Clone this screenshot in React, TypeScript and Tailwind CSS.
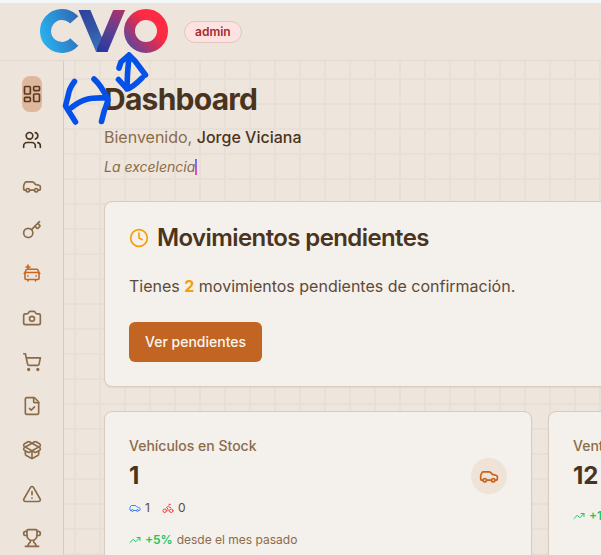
import React from "react";
import {
  Bike, Camera, Car, Clock, FileCheck, Key, LayoutDashboard,
  PackageOpen, ShoppingCart, TrendingUp, TriangleAlert, Trophy, Users,
} from "lucide-react";

function Logo() {
  return (
    <svg className="mb-px ml-10 h-[46px] w-[130px]" viewBox="40 8 130 46" fill="none">
      <defs>
        <linearGradient id="ring-blue" gradientUnits="userSpaceOnUse" x1="50" y1="52" x2="74" y2="10">
          <stop stopColor="#29b5f2" />
          <stop offset="1" stopColor="#3260ae" />
        </linearGradient>
        <linearGradient id="arm-left" gradientUnits="userSpaceOnUse" x1="85" y1="10" x2="102" y2="52">
          <stop stopColor="#2f459d" />
          <stop offset=".45" stopColor="#3454a6" />
          <stop offset="1" stopColor="#377bbf" />
        </linearGradient>
        <linearGradient id="arm-right" gradientUnits="userSpaceOnUse" x1="119" y1="10" x2="102" y2="52">
          <stop stopColor="#a8326f" />
          <stop offset=".5" stopColor="#5e408f" />
          <stop offset="1" stopColor="#2638a0" />
        </linearGradient>
        <linearGradient id="ring-red" gradientUnits="userSpaceOnUse" x1="130" y1="45" x2="157" y2="21">
          <stop stopColor="#66459a" />
          <stop offset=".45" stopColor="#c03262" />
          <stop offset=".8" stopColor="#ff2a43" />
        </linearGradient>
        <clipPath id="arms">
          <rect x="76" y="10" width="52" height="42" />
        </clipPath>
        <clipPath id="foot">
          <rect x="97" y="8" width="32" height="46" />
        </clipPath>
      </defs>
      <circle cx="62" cy="31" r="16.5" stroke="url(#ring-blue)" strokeWidth="11" pathLength="360" strokeDasharray="276 84" transform="rotate(42 62 31)" />
      <g clipPath="url(#arms)" strokeWidth="11">
        <line x1="82.3" y1="5" x2="104.2" y2="57" stroke="url(#arm-left)" />
        <g clipPath="url(#foot)">
          <line x1="121.3" y1="5" x2="99.4" y2="57" stroke="url(#arm-right)" />
        </g>
      </g>
      <circle cx="146" cy="31" r="16.5" stroke="url(#ring-red)" strokeWidth="11" />
    </svg>
  );
}

function CarPlus() {
  return (
    <svg className="size-5" viewBox="0 0 20 20" fill="none" stroke="currentColor" strokeWidth="1.6" strokeLinecap="round" strokeLinejoin="round">
      <path d="M6 1v4M4 3h4M3 8.5l1.2-2.7c.2-.4.6-.6 1-.6h9.6c.4 0 .8.2 1 .6L17 8.5M3 8.5h14v6c0 .7-.4 1-1 1H4c-.6 0-1-.3-1-1v-6ZM3 8.500l-.8 1M17 8.500l.8 1M5.800 12h.3M13.900 12h.3M6 15.500V17M13.500 15.500V17" />
    </svg>
  );
}

const lowerItems = [Camera, ShoppingCart, FileCheck, PackageOpen, TriangleAlert, Trophy];

function Sidebar() {
  return (
    <aside className="flex w-16 shrink-0 flex-col items-center border-r border-[#d8cabd] bg-[#ede5dc] pt-[15px] text-[#8b6b4a]">
      <div className="flex h-9 w-5 shrink-0 items-center justify-center rounded-lg bg-[#dfb79c] text-[#5a3a20]">
        <LayoutDashboard size={20} />
      </div>
      <div className="mt-[10px] flex h-9 shrink-0 items-center text-[#4a3420]"><Users size={20} /></div>
      <div className="mt-[10px] flex h-9 shrink-0 items-center"><Car size={20} /></div>
      <div className="mt-2 flex h-9 shrink-0 items-center"><Key size={20} /></div>
      <div className="mt-2 flex h-9 shrink-0 items-center text-[#c8641f]"><CarPlus /></div>
      {lowerItems.map((Icon, i) => (
        <div key={i} className="mt-2 flex h-9 shrink-0 items-center"><Icon size={20} /></div>
      ))}
    </aside>
  );
}

const card = "rounded-lg border border-[#d9cbbd] bg-[#f4f0eb] shadow-xs";

function PendingCard() {
  return (
    <section className={card + " mt-6 h-[186px] w-[900px] px-6 pt-5"}>
      <h2 className="flex items-center gap-2 text-2xl font-semibold tracking-tight text-[#4a3420]">
        <Clock size={20} className="text-[#f59e0b]" />
        Movimientos pendientes
      </h2>
      <p className="mt-5 text-base text-[#5e4a38]">
        Tienes <b className="font-bold text-[#f59e0b]">2</b> movimientos pendientes de confirmación.
      </p>
      <button className="mt-6 h-10 rounded-md bg-[#c26522] px-4 text-sm font-medium text-[#faf6f2]">Ver pendientes</button>
    </section>
  );
}

function Stats() {
  return (
    <div className="mt-6 flex gap-4">
      <section className={card + " flex h-[200px] w-[428px] shrink-0 justify-between px-6 pt-6"}>
        <div>
          <div className="text-sm font-medium text-[#8b6b4a]">Vehículos en Stock</div>
          <div className="mt-1 text-2xl font-bold text-[#4a3420]">1</div>
          <div className="mt-2 flex items-center text-xs text-[#5e4a38]">
            <Car size={12} className="mr-1 text-[#3b82f6]" />1
            <Bike size={12} className="mr-1 ml-3 text-[#ef4444]" />0
          </div>
          <div className="mt-4 flex items-center gap-1 text-xs text-[#8b6b4a]">
            <TrendingUp size={12} className="text-[#22c55e]" />
            <span className="font-semibold text-[#22c55e]">+5%</span>desde el mes pasado
          </div>
        </div>
        <div className="mt-[22px] flex size-9 items-center justify-center rounded-full bg-[#efe2d6] text-[#c8641f]">
          <Car size={20} />
        </div>
      </section>
      <section className={card + " h-[200px] w-[428px] shrink-0 px-6 pt-6"}>
        <div className="text-sm font-medium text-[#8b6b4a]">Ventas del Mes</div>
        <div className="mt-1 text-2xl font-bold text-[#4a3420]">12</div>
        <div className="mt-4 flex items-center gap-1 text-xs text-[#8b6b4a]">
          <TrendingUp size={12} className="text-[#22c55e]" />
          <span className="font-semibold text-[#22c55e]">+12%</span>
        </div>
      </section>
    </div>
  );
}

// Freehand blue arrows laid over the page.
function Annotations() {
  return (
    <svg className="pointer-events-none absolute inset-0 h-[555px] w-[601px]" fill="none" stroke="#0550e8" strokeWidth="5.6" strokeLinecap="round" strokeLinejoin="round">
      <path d="M74.500 81.500Q69.500 88 68.500 94L65.500 106L75.500 122M71.500 107.500Q80 101 86 99.500Q93 97.500 105 98M94 79Q101 85 108 99.500Q107 104 104.500 110L101.500 121.500" />
      <path d="M119 68L121 62L129 55L128.500 62L127.500 74L127 89M129 55L135 61L145.500 75M118.500 79.500L127 89Q132 88 142 78" />
    </svg>
  );
}

export default function App() {
  return (
    <div className="relative flex h-[555px] w-full flex-col overflow-hidden border-t-[3px] border-[#f2f7fa] bg-[#eee6dd] font-['Inter','Liberation_Sans',sans-serif]">
      <header className="flex h-[58px] shrink-0 items-center border-b border-[#e2d8cd] bg-[#ede5dc]">
        <Logo />
        <span className="ml-[14px] flex h-[22px] items-center rounded-full border border-[#dfc7bc] bg-[#fee2e2] px-2.5 text-xs font-semibold text-[#a52b2b]">admin</span>
      </header>
      <div className="flex min-h-0 flex-1">
        <Sidebar />
        <main className="min-w-0 flex-1 overflow-hidden bg-[linear-gradient(#e8e0d6_2px,transparent_2px),linear-gradient(90deg,#e8e0d6_2px,transparent_2px)] bg-[size:25px_25px] bg-[position:10px_17px] pt-5 pl-10 whitespace-nowrap">
          <h1 className="text-3xl font-bold tracking-tight text-[#4a3420]">Dashboard</h1>
          <p className="mt-2 text-base text-[#8b6b4a]">Bienvenido, <span className="font-medium text-[#4a3420]">Jorge Viciana</span></p>
          <p className="mt-2 flex h-5 items-center text-sm text-[#8b6b4a] italic">
            La excelencia<span className="h-4 w-0.5 bg-gradient-to-b from-[#3b82f6] via-[#a855f7] to-[#ec4899]" />
          </p>
          <PendingCard />
          <Stats />
        </main>
      </div>
      <div className="absolute -top-[3px] left-0"><div className="relative h-[555px] w-[601px]"><Annotations /></div></div>
    </div>
  );
}
